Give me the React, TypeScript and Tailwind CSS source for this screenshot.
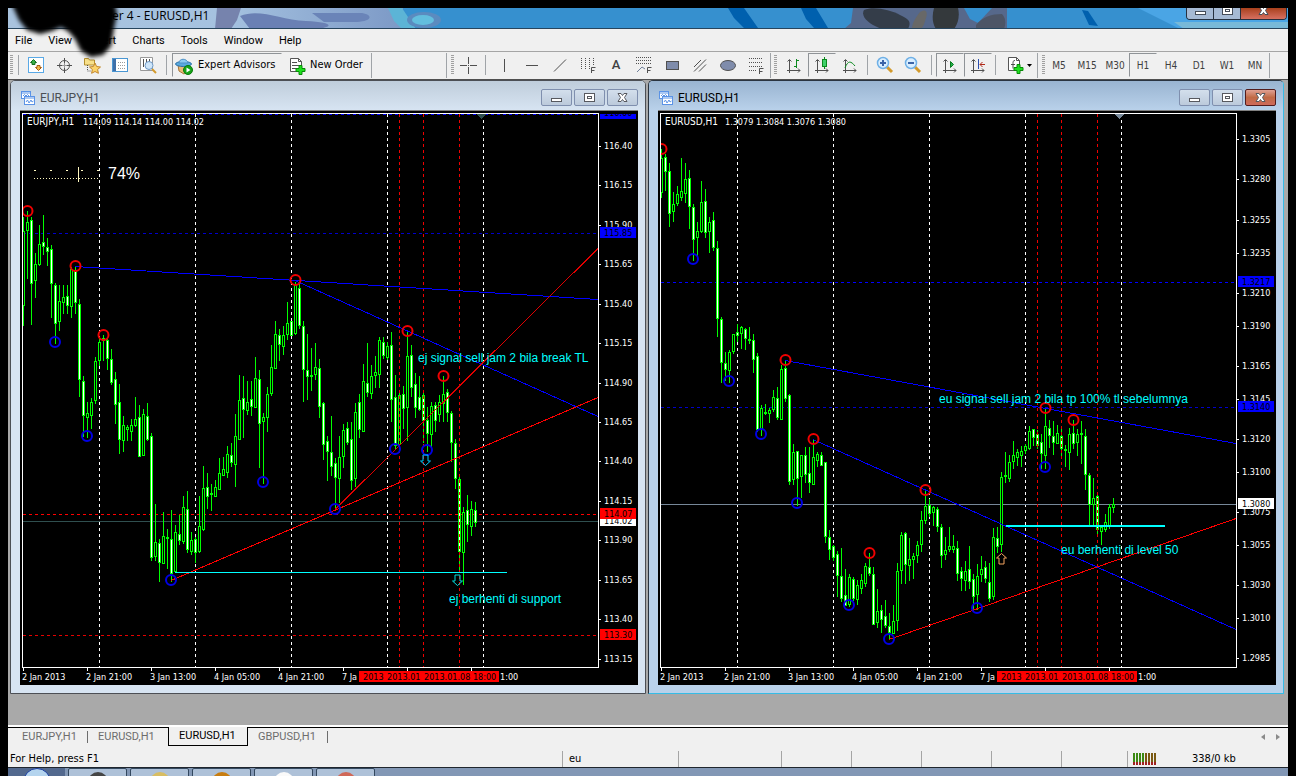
import type { ReactNode } from 'react';
import { clsx } from 'clsx';

// [high, body top, body bottom, low, falling]
type Candle = [number, number, number, number, 0 | 1];
type Point = [number, number];

interface ChartData {
  symbol: string;
  quote: string;
  quoteX: number;
  left: number;
  candles: Candle[];
  highs: Point[];
  lows: Point[];
  days: number[];
  marks: number[];
  levels: { y: number; color: string; dash?: boolean }[];
  trends: { from: Point; to: Point; color: string; width?: number }[];
  prices: [string, number][];
  tags: { text: string; y: number; bg: string; color: string }[];
  notes: { text: string; x: number; y: number }[];
  arrows: { x: number; y: number; up?: boolean; color: string }[];
}

const eurjpy: ChartData = {
  symbol: 'EURJPY,H1',
  quote: '114.09 114.14 114.00 114.02',
  quoteX: 83,
  left: 20,
  candles: [
    [217, 231, 305, 325, 0], [211, 222, 230, 278, 0], [217, 220, 283, 324, 1], [253, 264, 280, 297, 0],
    [225, 244, 264, 265, 0], [215, 242, 246, 254, 1], [238, 247, 251, 265, 1], [245, 249, 283, 317, 1],
    [283, 285, 323, 343, 1], [285, 301, 321, 330, 0], [285, 297, 302, 313, 0], [285, 296, 305, 313, 1],
    [267, 269, 306, 317, 0], [267, 271, 302, 313, 1], [299, 304, 379, 396, 1], [376, 381, 415, 436, 1],
    [402, 413, 417, 437, 0], [398, 402, 415, 428, 0], [357, 361, 400, 403, 0], [339, 342, 360, 365, 0],
    [335, 338, 340, 360, 0], [338, 340, 358, 369, 1], [349, 359, 382, 384, 1], [372, 379, 404, 423, 1],
    [384, 402, 439, 453, 1], [416, 425, 440, 451, 0], [425, 427, 429, 440, 0], [419, 425, 431, 440, 0],
    [397, 419, 425, 426, 0], [405, 417, 456, 456, 1], [409, 414, 455, 455, 0], [403, 416, 439, 440, 1],
    [433, 436, 557, 560, 1], [504, 542, 556, 560, 0], [539, 543, 562, 581, 1], [512, 536, 563, 563, 0],
    [529, 537, 538, 568, 0], [510, 539, 573, 581, 1], [525, 532, 571, 572, 0], [515, 534, 540, 544, 1],
    [496, 507, 541, 543, 0], [491, 509, 549, 552, 1], [532, 540, 551, 554, 0], [537, 539, 552, 562, 1],
    [496, 526, 551, 552, 0], [466, 488, 529, 530, 0], [473, 487, 496, 508, 1], [484, 493, 494, 510, 0],
    [480, 487, 496, 496, 0], [458, 473, 489, 489, 0], [457, 469, 475, 475, 0], [446, 454, 472, 477, 0],
    [443, 455, 462, 466, 1], [414, 436, 464, 486, 0], [375, 400, 439, 439, 0], [376, 398, 409, 437, 1],
    [381, 402, 410, 414, 0], [381, 399, 406, 415, 1], [357, 378, 407, 407, 0], [370, 379, 423, 467, 1],
    [413, 417, 421, 483, 0], [387, 394, 417, 431, 0], [345, 367, 393, 395, 0], [321, 334, 368, 368, 0],
    [329, 335, 344, 360, 1], [326, 335, 346, 354, 0], [302, 323, 334, 339, 0], [321, 321, 335, 335, 1],
    [282, 285, 333, 334, 0], [284, 288, 325, 328, 1], [321, 326, 369, 401, 1], [334, 370, 376, 399, 1],
    [348, 375, 376, 390, 0], [343, 367, 374, 379, 0], [359, 368, 406, 417, 1], [402, 403, 444, 459, 1],
    [436, 441, 451, 480, 1], [416, 452, 466, 475, 1], [458, 463, 477, 509, 1], [436, 457, 478, 502, 0],
    [424, 430, 456, 467, 0], [422, 428, 442, 444, 1], [422, 439, 480, 489, 1], [403, 412, 478, 486, 0],
    [394, 402, 429, 437, 1], [364, 381, 431, 431, 0], [343, 383, 392, 396, 1], [365, 376, 393, 398, 0],
    [356, 372, 375, 387, 0], [337, 340, 374, 387, 0], [337, 342, 355, 358, 1], [342, 346, 357, 359, 0],
    [332, 345, 399, 421, 1], [375, 397, 445, 449, 1], [393, 395, 444, 445, 0], [386, 394, 408, 428, 1],
    [331, 356, 407, 440, 0], [345, 355, 387, 396, 1], [373, 384, 407, 417, 1], [376, 397, 409, 410, 1],
    [390, 395, 420, 442, 1], [407, 420, 433, 451, 1], [402, 406, 434, 446, 0], [402, 405, 420, 431, 1],
    [395, 402, 414, 421, 0], [376, 394, 403, 421, 0], [389, 392, 412, 421, 1], [411, 413, 442, 461, 1],
    [439, 443, 478, 488, 1], [477, 479, 551, 572, 1], [507, 512, 552, 584, 0], [495, 510, 524, 541, 1],
    [501, 509, 526, 535, 0], [502, 510, 522, 526, 1],
  ],
  highs: [[27, 211], [75, 266], [103, 335], [295, 280], [407, 331], [443, 376]],
  lows: [[55, 342], [87, 436], [171, 580], [263, 482], [335, 509], [395, 449], [427, 450]],
  days: [99, 195, 291, 387, 483],
  marks: [399, 423, 459],
  levels: [
    { y: 114, color: '#0000ff', dash: true },
    { y: 233, color: '#0000cc', dash: true },
    { y: 514, color: '#ff0000', dash: true },
    { y: 521, color: '#2f4f4f' },
    { y: 635, color: '#e60000', dash: true },
  ],
  trends: [
    { from: [75, 266], to: [598, 299], color: '#0000ff' },
    { from: [295, 280], to: [598, 416], color: '#0000ff' },
    { from: [335, 509], to: [598, 248], color: '#e00000' },
    { from: [171, 580], to: [598, 397], color: '#ff0000' },
    { from: [175, 572], to: [507, 572], color: '#00ffff' },
  ],
  prices: [
    ['116.40', 146], ['116.15', 185], ['115.90', 225], ['115.65', 264], ['115.40', 304], ['115.15', 343],
    ['114.90', 383], ['114.65', 422], ['114.40', 461], ['114.15', 501], ['113.90', 540], ['113.65', 580],
    ['113.40', 619], ['113.15', 659],
  ],
  tags: [
    { text: '116.60', y: 113, bg: '#0000ff', color: '#000000' },
    { text: '115.85', y: 233, bg: '#0000ff', color: '#000000' },
    { text: '114.02', y: 521, bg: '#ffffff', color: '#000000' },
    { text: '114.07', y: 514, bg: '#ff0000', color: '#000000' },
    { text: '113.30', y: 635, bg: '#ff0000', color: '#000000' },
  ],
  notes: [
    { text: 'ej signal sell jam 2 bila break TL', x: 418, y: 362 },
    { text: 'ej berhenti di support', x: 449, y: 603 },
  ],
  arrows: [
    { x: 425, y: 460, color: '#00ccff' },
    { x: 457, y: 580, color: '#00dddd' },
  ],
};

const eurusd: ChartData = {
  symbol: 'EURUSD,H1',
  quote: '1.3079 1.3084 1.3076 1.3080',
  quoteX: 725,
  left: 658,
  candles: [
    [149, 158, 192, 197, 0], [154, 157, 171, 190, 1], [163, 171, 213, 226, 1], [192, 204, 211, 221, 0],
    [186, 194, 203, 205, 0], [158, 191, 197, 200, 0], [163, 179, 193, 202, 0], [170, 178, 206, 228, 1],
    [204, 207, 239, 260, 1], [222, 231, 237, 255, 0], [181, 202, 231, 232, 0], [189, 201, 232, 237, 1],
    [217, 222, 231, 252, 0], [212, 220, 247, 250, 1], [241, 248, 318, 336, 1], [317, 319, 362, 382, 1],
    [352, 363, 369, 380, 1], [350, 352, 370, 382, 0], [334, 334, 351, 353, 0], [324, 332, 335, 341, 1],
    [326, 327, 333, 348, 0], [328, 329, 338, 349, 1], [327, 339, 340, 343, 0], [334, 340, 359, 372, 1],
    [353, 356, 429, 431, 1], [405, 408, 429, 435, 0], [404, 412, 413, 414, 0], [408, 410, 413, 422, 0],
    [390, 397, 409, 411, 0], [387, 398, 417, 419, 1], [365, 369, 419, 419, 0], [360, 368, 398, 401, 1],
    [394, 395, 481, 484, 1], [444, 452, 479, 484, 0], [451, 451, 478, 505, 1], [455, 455, 476, 497, 0],
    [447, 455, 474, 482, 1], [447, 473, 482, 492, 1], [440, 457, 484, 484, 0], [452, 454, 460, 466, 0],
    [452, 455, 465, 465, 1], [462, 462, 536, 542, 1], [530, 537, 549, 559, 1], [545, 546, 557, 560, 1],
    [551, 554, 575, 596, 1], [548, 576, 598, 601, 1], [569, 595, 605, 605, 1], [574, 577, 604, 606, 0],
    [577, 579, 598, 600, 1], [580, 585, 599, 604, 0], [574, 580, 588, 593, 0], [563, 566, 583, 586, 0],
    [553, 567, 573, 575, 1], [567, 574, 624, 624, 1], [589, 611, 622, 627, 0], [605, 610, 619, 632, 1],
    [600, 616, 625, 627, 1], [613, 626, 632, 639, 1], [605, 621, 633, 633, 0], [563, 571, 620, 630, 0],
    [532, 535, 570, 583, 0], [532, 533, 564, 583, 1], [538, 559, 565, 580, 0], [553, 556, 559, 578, 0],
    [541, 545, 555, 562, 0], [511, 520, 544, 551, 0], [490, 506, 520, 523, 0], [499, 505, 513, 516, 1],
    [506, 507, 512, 525, 0], [507, 509, 526, 531, 1], [524, 527, 555, 567, 1], [537, 550, 554, 559, 0],
    [527, 546, 549, 551, 0], [535, 546, 549, 552, 0], [541, 548, 573, 580, 1], [567, 571, 578, 590, 1],
    [561, 571, 580, 590, 0], [546, 569, 581, 588, 1], [574, 579, 596, 609, 1], [564, 576, 594, 609, 0],
    [556, 569, 574, 581, 0], [561, 567, 578, 582, 1], [563, 582, 598, 601, 1], [528, 537, 596, 599, 0],
    [527, 538, 546, 552, 1], [472, 477, 544, 551, 0], [452, 475, 476, 482, 0], [455, 462, 478, 481, 0],
    [441, 455, 461, 468, 0], [449, 452, 457, 465, 0], [446, 451, 455, 466, 0], [444, 446, 450, 453, 0],
    [426, 431, 448, 449, 0], [429, 429, 437, 445, 1], [430, 434, 445, 448, 1], [434, 442, 453, 468, 1],
    [409, 426, 455, 468, 0], [420, 428, 435, 447, 1], [421, 436, 442, 454, 1], [425, 433, 443, 443, 0],
    [429, 436, 448, 456, 1], [445, 449, 450, 466, 0], [428, 434, 452, 469, 0], [420, 433, 443, 448, 1],
    [429, 434, 442, 455, 0], [421, 433, 434, 463, 0], [429, 436, 474, 489, 1], [473, 475, 504, 525, 1],
    [478, 498, 504, 525, 0], [495, 496, 529, 534, 1], [525, 527, 531, 544, 0], [514, 522, 529, 531, 0],
    [504, 507, 525, 528, 0], [498, 504, 507, 512, 0],
  ],
  highs: [[661, 149], [785, 360], [813, 439], [869, 553], [925, 490], [1045, 408], [1073, 420]],
  lows: [[693, 259], [729, 381], [761, 434], [797, 503], [849, 605], [889, 639], [977, 608], [1045, 467]],
  days: [737, 833, 929, 1025, 1121],
  marks: [1037, 1061, 1097],
  levels: [
    { y: 282, color: '#0000ff', dash: true },
    { y: 407, color: '#0000cc', dash: true },
    { y: 504, color: '#778899' },
  ],
  trends: [
    { from: [785, 360], to: [1236, 443], color: '#0000ff' },
    { from: [813, 439], to: [1236, 629], color: '#0000ff' },
    { from: [889, 639], to: [1236, 518], color: '#ff0000' },
    { from: [1006, 525.5], to: [1165, 525.5], color: '#00ffff', width: 2 },
  ],
  prices: [
    ['1.3305', 139], ['1.3280', 179], ['1.3255', 220], ['1.3235', 253], ['1.3210', 293], ['1.3190', 326],
    ['1.3165', 366], ['1.3145', 399], ['1.3120', 439], ['1.3100', 472], ['1.3075', 512], ['1.3055', 545],
    ['1.3030', 585], ['1.3010', 618], ['1.2985', 658],
  ],
  tags: [
    { text: '1.3217', y: 282, bg: '#0000ff', color: '#000000' },
    { text: '1.3140', y: 407, bg: '#0000ff', color: '#000000' },
    { text: '1.3080', y: 504, bg: '#ffffff', color: '#000000' },
  ],
  notes: [
    { text: 'eu signal sell jam 2 bila tp 100% tl sebelumnya', x: 939, y: 403 },
    { text: 'eu berhenti di level 50', x: 1061, y: 554 },
  ],
  arrows: [{ x: 1001, y: 559, up: true, color: '#f4a460' }],
};

const dates = ['2 Jan 2013', '2 Jan 21:00', '3 Jan 13:00', '4 Jan 05:00', '4 Jan 21:00', '7 Ja'];

function PriceChart({ data, meter }: { data: ChartData; meter?: boolean }) {
  const L = data.left;
  const axisX = L + 578;
  const clip = `plot-${L}`;
  return (
    <svg
      className="block h-[574px] w-full bg-black font-['DejaVu_Sans_Condensed','DejaVu_Sans',sans-serif] text-[9px]"
      shapeRendering="crispEdges"
      role="img"
      aria-label={`${data.symbol} chart`}
    >
      <defs>
        <clipPath id={clip}>
          <rect x={L + 3} y={114} width={575} height={553} />
        </clipPath>
      </defs>
      <g transform={`translate(${-L} -111)`}>
        <g clipPath={`url(#${clip})`}>
          {data.days.map(x => (
            <path key={x} d={`M${x + 0.5} 114V667`} stroke="#fff" strokeDasharray="3 3" />
          ))}
          {data.levels.map(l => (
            <path
              key={l.y}
              d={`M${L + 3} ${l.y + 0.5}H${axisX}`}
              stroke={l.color}
              strokeDasharray={l.dash ? '3 3' : undefined}
            />
          ))}

          {data.candles.map(([high, top, bottom, low, falling], i) => {
            const x = L + 3 + i * 4;
            const h = bottom - top + 1;
            return (
              <g key={i}>
                <rect x={x} y={high} width={1} height={low - high + 1} fill="#00ff00" />
                <rect x={x - 1} y={top} width={3} height={h} fill="#00ff00" />
                {h > 2 && <rect x={x} y={top + 1} width={1} height={h - 2} fill={falling ? '#fff' : '#000'} />}
              </g>
            );
          })}

          {data.marks.map(x => (
            <path key={x} d={`M${x + 0.5} 114V667`} stroke="#f00000" strokeDasharray="3 3" />
          ))}
          {data.trends.map((t, i) => (
            <path
              key={i}
              d={`M${t.from[0]} ${t.from[1] + 0.5}L${t.to[0]} ${t.to[1] + 0.5}`}
              stroke={t.color}
              strokeWidth={t.width ?? 1}
            />
          ))}
          <g fill="none" strokeWidth="2" shapeRendering="geometricPrecision">
            {data.highs.map(([x, y]) => (
              <circle key={x} cx={x + 0.5} cy={y} r={5} stroke="#f00000" />
            ))}
            {data.lows.map(([x, y]) => (
              <circle key={x} cx={x} cy={y} r={5} stroke="#0000e6" />
            ))}
          </g>
          {data.arrows.map(a => (
            <path
              key={a.x}
              transform={`translate(${a.x + 0.5} ${a.y}) scale(1 ${a.up ? -1 : 1})`}
              d="M-2.500 -5H2.500V1H5L0 5.500L-5 1H-2.500Z"
              fill="none"
              stroke={a.color}
              shapeRendering="geometricPrecision"
            />
          ))}
        </g>

        {/* plot frame and time scale */}
        <path d={`M${L + 2}.5 667V113.5H${axisX}.5V667.5H${L + 2}`} fill="none" stroke="#fff" />
        {dates.concat('', '').map((_, i) => (
          <path key={i} d={`M${L + 3 + i * 64}.5 668v3`} stroke="#fff" />
        ))}
        <path
          d={`M${L + 457} 114h9l-4.500 5z`}
          fill={meter ? '#2f4f4f' : '#778899'}
        />
        <rect x={L + 339} y={671} width={140} height={11} fill="#ff0000" />
        <g fill="#fff">
          {dates.map((d, i) => (
            <text key={d} x={L + 2 + i * 64} y={680}>{d}</text>
          ))}
          <text x={L + 480} y={680}>1:00</text>
          <text x={L + 7} y={125} className="text-[10px]">{data.symbol}</text>
          <text x={data.quoteX} y={125}>{data.quote}</text>
        </g>
        <g fill="#000">
          <text x={L + 343} y={680}>2013</text>
          <text x={L + 367} y={680}>2013.01</text>
          <text x={L + 404} y={680}>2013.01.08 18:00</text>
        </g>

        {/* price scale */}
        {data.prices.map(([text, y]) => (
          <g key={text}>
            <path d={`M${axisX} ${y + 0.5}h3`} stroke="#fff" />
            <text x={axisX + 6} y={y + 3} fill="#fff">{text}</text>
          </g>
        ))}
        {data.tags.map(t => (
          <g key={t.text}>
            <rect x={axisX + 2} y={Math.max(t.y - 6, 114)} width={36} height={t.y < 114 ? 5 : 11} fill={t.bg} />
            <text x={axisX + 6} y={t.y + 3} fill={t.color}>{t.text}</text>
          </g>
        ))}

        <g className="font-['Liberation_Sans',Arial,sans-serif] text-[12px]" fill="#00ffff">
          {data.notes.map(n => (
            <text key={n.text} x={n.x} y={n.y}>{n.text}</text>
          ))}
        </g>

        {meter && (
          <g>
            <path d="M34 178.500H99" stroke="#fff8c0" strokeDasharray="1 2" />
            <path d="M34 170.500h2M50 170.500h2M66 170.500h2M81 170.500h2M97 170.500h2" stroke="#fff8c0" />
            <path d="M78.500 167v15" stroke="#fff8c0" />
            <text x={108} y={179} fill="#fff" className="font-['Liberation_Sans',Arial,sans-serif] text-[16px]">74%</text>
          </g>
        )}
      </g>
    </svg>
  );
}

function ChartIcon() {
  return (
    <svg className="h-[14px] w-[14px] shrink-0" viewBox="0 0 14 14" fill="#fff" stroke="#5b93e6">
      <rect x="0.5" y="0.5" width="9" height="7" />
      <path d="M.5 2h9M2 5l1.500-1.500L5 5l1.500-1.500L8 5" fill="none" />
      <rect x="3.500" y="5.500" width="10" height="8" />
      <path d="M3.500 7h10M5 11l1.500-2L8 12l2-3 1 2 1.500-1" fill="none" />
    </svg>
  );
}

const glyphs: Record<string, ReactNode> = {
  minimize: <rect x="3.500" y="7.500" width="10" height="3" />,
  maximize: <><rect x="3.500" y="2.500" width="10" height="8" /><rect x="6.500" y="5.500" width="4" height="2" /></>,
  close: <path d="M4 2.500h3l1.500 2 1.500-2h3L10.500 6.500 13 10.500h-3l-1.500-2-1.500 2H4l2.500-4z" />,
};

function WindowButton({ kind, active }: { kind: string; active?: boolean }) {
  return (
    <button
      aria-label={kind}
      className={clsx(
        'flex h-[17px] w-[31px] items-center justify-center rounded-[2px] border',
        kind === 'close' && active
          ? 'border-[#521c1c] bg-linear-to-b from-[#e0a193] via-[#c06a45] to-[#cf6a5a]'
          : 'border-[#7f8fae] bg-linear-to-b from-[#d3dfec] to-[#bccadb]',
      )}
    >
      <svg width="17" height="13" viewBox="0 0 17 13" fill="#fff" stroke="#57595f">{glyphs[kind]}</svg>
    </button>
  );
}

function ChartWindow({ data, active }: { data: ChartData; active?: boolean }) {
  return (
    <section
      className={clsx(
        'min-w-0 flex-1 rounded-t-[5px] border pr-[7px] pb-2 pl-[9px]',
        active ? 'border-[#2a3440] border-r-[#35bce6] border-b-[#35bce6] bg-[#b9d1ea]' : 'border-[#4c4f55] bg-[#d7e4f2]',
      )}
    >
      <header
        className={clsx(
          '-mr-[7px] -ml-[9px] flex h-[29px] items-center gap-[5px] rounded-t-[4px] pt-1 pr-[7px] pl-[10px] font-["Roboto",sans-serif] text-[12px]',
          active
            ? 'bg-linear-to-b from-[#99b4d1] to-[#b9d1ea] text-black'
            : 'bg-linear-to-b from-[#bfcddb] to-[#d7e4f2] text-[#4b4f55]',
        )}
      >
        <ChartIcon />
        <h2 className="flex-1">{data.symbol}</h2>
        <div className="flex gap-[2px]">
          <WindowButton kind="minimize" />
          <WindowButton kind="maximize" />
          <WindowButton kind="close" active={active} />
        </div>
      </header>
      <div className="border-t border-[#808080]">
        <PriceChart data={data} meter={!active} />
      </div>
    </section>
  );
}

function Grip() {
  return (
    <span className="h-5 w-[3px] shrink-0 bg-[repeating-linear-gradient(to_bottom,#a0a0a0_0_1px,transparent_1px_2px)]" />
  );
}

function Divider({ tall }: { tall?: boolean }) {
  return <span className={clsx('w-px shrink-0 bg-[#a0a4a8]', tall ? 'h-[25px]' : 'h-5')} />;
}

function Tool({ label, pressed, children }: { label: string; pressed?: boolean; children: ReactNode }) {
  return (
    <button
      aria-label={label}
      className={clsx(
        'flex h-6 w-7 shrink-0 items-center justify-center border text-[10px] text-[#404040]',
        pressed ? 'border-t-[#8f9397] border-r-transparent border-b-transparent border-l-[#8f9397]' : 'border-transparent',
      )}
    >
      {children}
    </button>
  );
}

function Icon({ children, stroke = '#505050' }: { children: ReactNode; stroke?: string }) {
  return (
    <svg className="h-[18px] w-[18px] shrink-0" viewBox="0 0 18 18" fill="none" stroke={stroke}>
      {children}
    </svg>
  );
}

const axes = <path d="M4.500 17V4M2.500 5.500l2-2 2 2M2 14.500h13M13 12.500l2 2-2 2" />;
const plus = <path d="M11 8.500h3v3h3v3h-3v3h-3v-3H8v-3h3z" fill="#1fe01f" stroke="#078a07" />;

function Lens({ children }: { children?: ReactNode }) {
  return (
    <Icon>
      <path d="M11 11l5 5" stroke="#d39a2c" strokeWidth="3" />
      <circle cx="7" cy="7" r="5.500" fill="#d9eeff" stroke="#6fb0e6" strokeWidth="1.500" />
      {children}
    </Icon>
  );
}

const sheet = (
  <>
    <path d="M2.500 1.500h8l3 3v10h-11z" fill="#fff" stroke="#555" />
    <path d="M10.500 1.500v3h3" stroke="#555" />
  </>
);

function Toolbar() {
  return (
    <div className="flex h-[28px] items-center overflow-hidden border-t border-[#a5a5a5] bg-[#f0f0f0] pb-px pl-[2px] font-['DejaVu_Sans_Condensed','DejaVu_Sans',sans-serif]">
      <Grip />
      <span className="w-[5px] shrink-0" />
      <Divider />
      <span className="w-[3px] shrink-0" />
      <Tool label="Market Watch">
        <Icon>
          <rect x="1.500" y="1.500" width="15" height="15" fill="#fff" stroke="#5aa9e6" />
          <path d="M6.500 3.500l3 3h-1.500v2H5v-2H3.500z" fill="#38b048" stroke="#14701f" />
          <path d="M11.500 14.500l-3-3h1.500v-2h3v2h1.500z" fill="#f2b84a" stroke="#a85d10" />
        </Icon>
      </Tool>
      <Tool label="Data Window">
        <Icon>
          <circle cx="9.500" cy="9.500" r="5" />
          <path d="M9.500 2v5M9.500 12v5M2 9.500h5M12 9.500h5" />
          <path d="M9.500 7v5M7 9.500h5" stroke="#999" />
        </Icon>
      </Tool>
      <Tool label="Navigator">
        <Icon>
          <path d="M1.500 2.500h4l1 1.500h5v5h-10z" fill="#f8e08a" stroke="#b5902f" />
          <path d="M4.500 9v6h3" strokeDasharray="1 1" />
          <path d="M12 7l1.600 3.500 3.900.5-2.900 2.500.8 3.800L12 15.500l-3.400 1.800.8-3.800L6.500 11l3.900-.5z" fill="#fbd36a" stroke="#c2862a" />
        </Icon>
      </Tool>
      <Tool label="Terminal">
        <Icon>
          <rect x="1.500" y="2.500" width="15" height="13" fill="#fff" stroke="#4a96d2" />
          <rect x="2" y="3" width="3" height="12" fill="#3e6fa8" stroke="none" />
          <path d="M7 6.500h8M7 9.500h8M7 12.500h8" stroke="#9a9a9a" strokeDasharray="1 1" />
        </Icon>
      </Tool>
      <Tool label="Strategy Tester">
        <Icon>
          <path d="M1.500 1.500h12v13h-12z" fill="#fff" stroke="#999" />
          <path d="M4.500 3v8M7.500 3v3M10.500 3v4" />
          <path d="M13 13l4 4" stroke="#d39a2c" strokeWidth="2" />
          <circle cx="10" cy="9.500" r="4" fill="#cfe6fa" stroke="#6f98c4" />
        </Icon>
      </Tool>
      <span className="w-1 shrink-0" />
      <Divider />
      <span className="w-[5px] shrink-0" />
      <button className="flex h-6 w-[110px] shrink-0 items-center gap-[5px] border border-t-[#8f9397] border-r-transparent border-b-transparent border-l-[#8f9397] pt-px pl-[2px] text-[11px] whitespace-nowrap">
        <Icon>
          <path d="M3 8h11l-1 6-4 3-5-3z" fill="#e9b976" stroke="#a8753a" />
          <ellipse cx="8.500" cy="7" rx="8" ry="2.500" fill="#5aaade" stroke="#2a6fa6" />
          <path d="M4 6c0-5 8-5 9 0z" fill="#8ccaf0" stroke="#4a8fc6" />
          <circle cx="13" cy="13" r="4.500" fill="#16a316" stroke="#0a7a0a" />
          <path d="M11.500 10.500v5l4-2.500z" fill="#fff" stroke="none" />
        </Icon>
        Expert Advisors
      </button>
      <button className="flex h-6 w-[89px] shrink-0 items-center gap-[4px] pt-px pl-[6px] text-[11px] whitespace-nowrap">
        <Icon>{sheet}<path d="M4 5.500h5M4 8.500h7M4 11.500h4" />{plus}</Icon>
        New Order
      </button>
      <Divider tall />
      <span className="w-[74px] shrink-0" />
      <Divider tall />
      <span className="w-1 shrink-0" />
      <Grip />
      <Tool label="Crosshair">
        <Icon><path d="M9.500 1v7M9.500 11v7M1 9.500h7M11 9.500h7M9 9.500h1" /></Icon>
      </Tool>
      <span className="w-[3px] shrink-0" />
      <Divider />
      <span className="w-1 shrink-0" />
      <Tool label="Vertical line"><Icon><path d="M9.500 3v13" /></Icon></Tool>
      <Tool label="Horizontal line"><Icon><path d="M3 9.500h12" /></Icon></Tool>
      <Tool label="Trendline"><Icon><path d="M3 15.500L15 3.500" /></Icon></Tool>
      <Tool label="Cycle lines">
        <Icon>
          <path d="M2.500 2v12M6.500 2v12M10.500 2v12M14.500 2v7" strokeDasharray="1 1" />
          <path d="M12.500 17v-5.500h4M12.500 14.500h3" />
        </Icon>
      </Tool>
      <Tool label="Text"><span className="font-['Roboto',sans-serif] text-[13px] font-medium">A</span></Tool>
      <Tool label="Fibonacci expansion">
        <Icon>
          <path d="M1 1.500h16M1 4.500h16M1 7.500h16" strokeDasharray="1 1" />
          <path d="M2 16l5-5 3 2" stroke="#70809a" />
          <path d="M12.500 17v-5.500h4M12.500 14.500h3" />
        </Icon>
      </Tool>
      <Tool label="Rectangle"><Icon><rect x="3.500" y="5.500" width="12" height="8" fill="#7f8cab" /></Icon></Tool>
      <Tool label="Channel"><Icon><path d="M3 11l7-7M3 15.500L15 3.500M8 15.500l7-7" /></Icon></Tool>
      <Tool label="Ellipse"><Icon><ellipse cx="9" cy="9.500" rx="7.500" ry="5" fill="#7f8cab" /></Icon></Tool>
      <Tool label="Fibonacci retracement">
        <Icon>
          <path d="M2 2.500h14M2 6.500h14M2 10.500h14M2 14.500h8" strokeDasharray="1 1" />
          <path d="M12.500 18v-5.500h4M12.500 15.500h3" />
        </Icon>
      </Tool>
      <Divider tall />
      <span className="w-[3px] shrink-0" />
      <Grip />
      <span className="w-[3px] shrink-0" />
      <Tool label="Bar chart"><Icon>{axes}<path d="M11.500 3v9M9 10.500h2.500M11.500 4.500H14" stroke="#0b8a1e" /></Icon></Tool>
      <Tool label="Candlesticks" pressed>
        <Icon>{axes}<path d="M11.500 1v12" stroke="#0b8a1e" /><rect x="9.500" y="3.500" width="4" height="7" fill="#3fd16a" stroke="#0b8a1e" /></Icon>
      </Tool>
      <Tool label="Line chart"><Icon>{axes}<path d="M4 12c3-8 6-7 10-2" stroke="#0b8a1e" /></Icon></Tool>
      <span className="w-[3px] shrink-0" />
      <Divider />
      <span className="w-[3px] shrink-0" />
      <Tool label="Zoom in"><Lens><path d="M4 7h6M7 4v6" stroke="#3a64a8" strokeWidth="2" /></Lens></Tool>
      <Tool label="Zoom out"><Lens><path d="M4 7h6" stroke="#3a64a8" strokeWidth="2" /></Lens></Tool>
      <span className="w-1 shrink-0" />
      <Divider />
      <span className="w-1 shrink-0" />
      <Tool label="Auto scroll" pressed><Icon>{axes}<path d="M9.500 5.500v6l3-3z" fill="#22b14c" stroke="#0b7a1e" /></Icon></Tool>
      <Tool label="Chart shift" pressed>
        <Icon>{axes}<path d="M9.500 3v10" stroke="#2a4fb0" /><path d="M16 8.500h-5M13.500 6L11 8.500l2.500 2.500" stroke="#b02a1a" /></Icon>
      </Tool>
      <span className="w-[3px] shrink-0" />
      <Divider />
      <span className="w-[5px] shrink-0" />
      <button aria-label="Indicators" className="flex h-6 w-9 shrink-0 items-center justify-center gap-[3px]">
        <Icon>{sheet}<path d="M9 4.500c-2 0-2 1-2 3v5M5 8.500h4" />{plus}</Icon>
        <svg width="5" height="3"><path d="M0 0h5L2.500 3z" /></svg>
      </button>
      <Divider tall />
      <span className="w-1 shrink-0" />
      <Grip />
      {['M5', 'M15', 'M30', 'H1', 'H4', 'D1', 'W1', 'MN'].map(p => (
        <Tool key={p} label={p} pressed={p === 'H1'}>{p}</Tool>
      ))}
      <Divider tall />
    </div>
  );
}

function TitleBar() {
  return (
    <header className="relative flex h-[21px] justify-between overflow-hidden border-b border-[#27455e] bg-[#3690cf] font-['Open_Sans',sans-serif] text-[12px]">
      <svg className="absolute inset-0 h-full w-full" aria-hidden="true">
        <defs>
          <linearGradient id="glass">
            <stop offset="0" stopColor="#a9c3de" />
            <stop offset=".55" stopColor="#a5c2e0" />
            <stop offset="1" stopColor="#7c99c6" />
          </linearGradient>
        </defs>
        <rect width="395" height="21" fill="url(#glass)" />
        <path d="M209 0h24l-4 12-6 9h-16z" fill="#7683ad" />
        <path d="M232 8c20-8 40 4 66 5s30 6 10 8h-66z" fill="#6a80b4" />
        <path d="M304 5h50c12 2 10 9-8 9h-30z" fill="#6a84b8" />
        <path d="M380 0h14l8 12 6 9h-14l-8-8z" fill="#5cb4d6" />
        <ellipse cx="416" cy="12" rx="17" ry="8" fill="#5b8bbf" />
        <ellipse cx="415" cy="12" rx="11" ry="5" fill="#62bede" />
        <path d="M720 0h16l14 20h-14l-10-10zM793 0h15l12 20h-14l-8-9z" fill="#0060ae" />
        <path d="M845 0h154v21H836l7-6z" fill="#56688b" />
        <path d="M856 2c10-4 26 0 36 5 8 4 12 6 8 14h-26c-12-4-22-12-18-19z" fill="#343d49" />
        <path d="M926 0h24c2 8 0 16-4 21h-18c-4-6-4-14-2-21z" fill="#34393c" />
        <path d="M912 4c6-4 8 0 6 6s-2 9-6 11h-8c0-6 4-12 8-17z" fill="#686867" />
        <path d="M956 0h28l-14 15-8-4z" fill="#3690cf" />
        <path d="M968 17c6-8 16-11 26-11 4 4 4 10 2 15h-28z" fill="#4d5566" />
        <path d="M1074 2l6 1 10 15-9-1z" fill="#0060ae" />
        <path d="M1130 0h150v21h-108z" fill="#4aa5e5" />
        <path d="M1166 14h114v7h-104z" fill="#78b9d8" />
      </svg>
      <h1 className="relative pl-[50px] leading-4 font-normal">MetaTrader 4 - EURUSD,H1</h1>
      <div className="relative mr-px flex h-3 divide-x divide-[#26303e] overflow-hidden rounded-b-[4px] border border-t-0 border-[#26303e]">
        <button aria-label="Minimize" className="flex w-[27px] items-start justify-center bg-[#a6bad4]">
          <svg width="17" height="8" viewBox="0 4 17 8" fill="#fff" stroke="#454c58">{glyphs.minimize}</svg>
        </button>
        <button aria-label="Restore" className="flex w-[27px] items-start justify-center bg-[#a6bad4]">
          <svg width="17" height="8" viewBox="0 4 17 8" fill="#fff" stroke="#454c58">{glyphs.maximize}</svg>
        </button>
        <button aria-label="Close" className="flex w-[45px] items-start justify-center bg-linear-to-b from-[#a9401a] to-[#d77060]">
          <svg width="17" height="8" viewBox="0 4 17 8" fill="#fff" stroke="#454c58">{glyphs.close}</svg>
        </button>
      </div>
    </header>
  );
}

const menu = ['File', 'View', 'Insert', 'Charts', 'Tools', 'Window', 'Help'];
const tabs = ['EURJPY,H1', 'EURUSD,H1', 'EURUSD,H1', 'GBPUSD,H1'];

function TaskBar() {
  return (
    <div className="flex h-[9px] items-start gap-[3px] overflow-hidden border-t border-[#20262e] bg-[#8297b5]">
      <div className="flex h-full w-[57px] justify-center bg-[#53698e]">
        <div className="h-7 w-7 rounded-full border border-[#173aa0] bg-[#b4d4ee]" />
      </div>
      {['bg-[#454545]', 'bg-[#d8bd62]', 'bg-[#c87d10]', 'bg-[#fafafa]', 'bg-[#d06858]'].map(c => (
        <div key={c} className="flex h-5 w-[59px] justify-center rounded-[2px] border border-[#33485f] bg-[#aec1d8] pt-[3px]">
          <span className={clsx('h-3 w-5 rounded-t-full', c)} />
        </div>
      ))}
    </div>
  );
}

export default function App() {
  return (
    <div className="relative min-h-screen bg-black pt-2 pr-2 pl-2 text-black">
      <TitleBar />
      <nav className="flex h-[22px] items-center gap-4 bg-[#f0f0f0] pt-[2px] pl-[7px] font-['Roboto',sans-serif] text-[11px]">
        {menu.map(m => (
          <button key={m}>{m}</button>
        ))}
      </nav>
      <Toolbar />

      <main className="flex h-[646px] items-start gap-[2px] border-t border-[#505050] bg-[#a9a9a9] pr-1 pl-[2px]">
        <ChartWindow data={eurjpy} />
        <ChartWindow data={eurusd} active />
      </main>

      <div className="flex h-[23px] items-start border-t-2 border-white bg-[#f0f0f0] font-['Roboto',sans-serif] text-[11px] text-[#6d6d6d]">
        <div className="flex h-[19px] flex-1">
          {tabs.map((t, i) => (
            <button
              key={i}
              className={clsx(
                'w-20 border-black text-left',
                i === 2 ? 'border-x border-b text-black' : 'border-t',
              )}
            >
              <span
                className={clsx(
                  'block leading-3',
                  i === 0 ? 'pl-[14px]' : 'pl-[10px]',
                  (i === 0 || i === 3) && 'border-r border-[#6d6d6d]',
                )}
              >
                {t}
              </span>
            </button>
          ))}
          <span className="flex-1 border-t border-black" />
        </div>
        <div className="flex h-[19px] items-center gap-[11px] border-t border-black pr-2">
          <svg width="4" height="6" fill="#8a8a8a"><path d="M4 0v6L0 3z" /></svg>
          <svg width="4" height="6" fill="#8a8a8a"><path d="M0 0v6l4-3z" /></svg>
        </div>
      </div>

      <footer className="flex h-[19px] items-center bg-[#f0f0f0] pt-[2px] pl-[2px] font-['DejaVu_Sans_Condensed','DejaVu_Sans',sans-serif] text-[11px] leading-4">
        <span className="flex-1">For Help, press F1</span>
        <span className="w-[116px] border-l border-[#a5a5a5] pl-[6px]">eu</span>
        <span className="h-4 w-[103px] border-l border-[#a5a5a5]" />
        <span className="h-4 w-[70px] border-l border-[#a5a5a5]" />
        <span className="h-4 w-[70px] border-l border-[#a5a5a5]" />
        <span className="h-4 w-[70px] border-l border-[#a5a5a5]" />
        <span className="h-4 w-[70px] border-l border-[#a5a5a5]" />
        <span className="h-4 w-[66px] border-l border-[#a5a5a5]" />
        <span className="flex h-4 w-[161px] items-center border-l border-[#a5a5a5] pl-[5px]">
          <svg className="h-[12px] w-[24px]" shapeRendering="crispEdges">
            <path d="M1 0v9M4 0v9M7 0v9M10 0v9" stroke="#3c8a12" strokeWidth="2" />
            <path d="M13 0v9M16 0v9M19 0v9M22 0v9" stroke="#7a5a12" strokeWidth="2" />
            <path d="M0 10.500h24" stroke="#a02020" strokeDasharray="2 1" strokeWidth="3" />
          </svg>
          <span className="pl-[35px]">338/0 kb</span>
        </span>
      </footer>
      <TaskBar />

      {/* ink scribble over the window caption */}
      <svg className="pointer-events-none absolute top-0 left-0 h-16 w-32 blur-[2px]" aria-hidden="true">
        <path d="M10 0h104l3 14-3 14-3 18-8 9-12 2-10-6-6-12-6-7-8-5-9 4-12 3-13-4-8-10z" />
      </svg>
    </div>
  );
}
